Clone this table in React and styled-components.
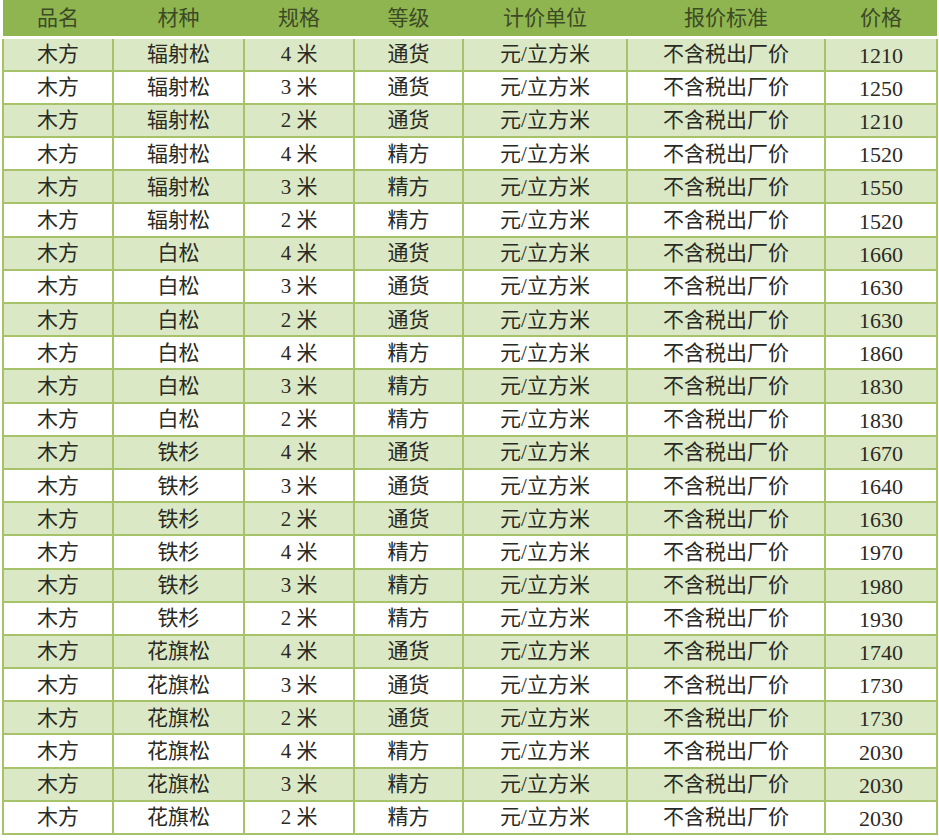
import React from "react";
import styled, { createGlobalStyle } from "styled-components";

const Global = createGlobalStyle`
  html, body { margin: 0; padding: 0; background: #fff; }
  body { font-family: "Liberation Serif", "Noto Sans CJK SC", serif; }
`;

const Wrap = styled.div`
  padding: 0 3px 0 2px;
  width: 934px;
`;

const Table = styled.table`
  border-collapse: collapse;
  table-layout: fixed;
  width: 934px;
  font-family: "Liberation Serif", "Noto Sans CJK SC", serif;
  font-size: 21px;
  line-height: 1;
  color: #2a2a24;
`;

const HeadCell = styled.th`
  height: 35px;
  padding: 1px 0 0;
  background: #8fb550;
  color: #3c4a26;
  font-weight: 400;
  text-align: center;
  border-bottom: 3px solid #fff;
`;

const Row = styled.tr`
  height: 33.2px;
  background: ${(p) => (p.$alt ? "#dbe8c6" : "#ffffff")};
`;

const Cell = styled.td`
  padding: 1px 0 0;
  text-align: center;
  vertical-align: middle;
  border: 2px solid #a6c36a;
  white-space: nowrap;
`;

const Num = styled.span`
  font-size: 22px;
  position: relative;
  top: 1px;
`;

const cols = [110, 131, 110, 109, 164, 198, 112];
const heads = ["品名", "材种", "规格", "等级", "计价单位", "报价标准", "价格"];

const species = ["辐射松", "白松", "铁杉", "花旗松"];
const prices = [
  [1210, 1250, 1210, 1520, 1550, 1520],
  [1660, 1630, 1630, 1860, 1830, 1830],
  [1670, 1640, 1630, 1970, 1980, 1930],
  [1740, 1730, 1730, 2030, 2030, 2030],
];
const lengths = ["4 米", "3 米", "2 米"];

const rows = [];
species.forEach((s, si) => {
  for (let i = 0; i < 6; i++) {
    rows.push([
      "木方",
      s,
      lengths[i % 3],
      i < 3 ? "通货" : "精方",
      "元/立方米",
      "不含税出厂价",
      String(prices[si][i]),
    ]);
  }
});

export default function App() {
  return (
    <>
      <Global />
      <Wrap>
        <Table>
          <colgroup>
            {cols.map((w, i) => (
              <col key={i} style={{ width: w }} />
            ))}
          </colgroup>
          <thead>
            <tr>
              {heads.map((h) => (
                <HeadCell key={h}>{h}</HeadCell>
              ))}
            </tr>
          </thead>
          <tbody>
            {rows.map((r, ri) => (
              <Row key={ri} $alt={ri % 2 === 0}>
                {r.map((c, ci) => (
                  <Cell key={ci}>{ci === 6 ? <Num>{c}</Num> : c}</Cell>
                ))}
              </Row>
            ))}
          </tbody>
        </Table>
      </Wrap>
    </>
  );
}
